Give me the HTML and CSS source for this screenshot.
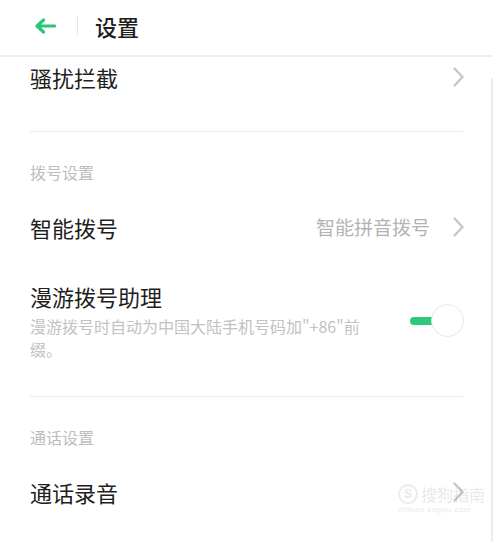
FILE: index.html
```html
<!DOCTYPE html>
<html lang="zh-CN">
<head>
<meta charset="utf-8">
<title>设置</title>
<link rel="stylesheet" href="styles.css">
</head>
<body>
<div class="screen">
  <header class="header">
    <svg class="back" width="22" height="16" viewBox="0 0 22 16"><path d="M20.5 8H3.5M9.5 2L3 8L9.5 14" fill="none" stroke="#2bc57a" stroke-width="3.2" stroke-linecap="round" stroke-linejoin="round"/></svg>
    <span class="vdiv"></span>
    <h1 class="title">设置</h1>
  </header>

  <div class="item item-first">
    <span class="item-title">骚扰拦截</span>
    <svg class="chev" width="11" height="20" viewBox="0 0 11 20"><path d="M1.5 1.5L9.5 10L1.5 18.5" fill="none" stroke="#c6c6c6" stroke-width="2.4" stroke-linecap="round" stroke-linejoin="round"/></svg>
  </div>
  <div class="divider divider-first"></div>

  <div class="section-label">拨号设置</div>
  <div class="item">
    <span class="item-title">智能拨号</span>
    <span class="item-value">智能拼音拨号</span>
    <svg class="chev" width="11" height="20" viewBox="0 0 11 20"><path d="M1.5 1.5L9.5 10L1.5 18.5" fill="none" stroke="#c6c6c6" stroke-width="2.4" stroke-linecap="round" stroke-linejoin="round"/></svg>
  </div>
  <div class="item item-multi">
    <div class="item-text">
      <div class="item-title">漫游拨号助理</div>
      <div class="item-desc">漫游拨号时自动为中国大陆手机号码加"+86"前缀。</div>
    </div>
    <div class="toggle">
      <span class="toggle-track"></span>
      <span class="toggle-knob"></span>
    </div>
  </div>
  <div class="divider divider-second"></div>

  <div class="section-label">通话设置</div>
  <div class="item">
    <span class="item-title">通话录音</span>
    <svg class="chev" width="11" height="20" viewBox="0 0 11 20"><path d="M1.5 1.5L9.5 10L1.5 18.5" fill="none" stroke="#c6c6c6" stroke-width="2.4" stroke-linecap="round" stroke-linejoin="round"/></svg>
  </div>

  <div class="scrollbar"></div>
  <div class="watermark">
    <div class="wm-row"><span class="wm-logo">S</span><span class="wm-name">搜狗指南</span></div>
    <div class="wm-url">zhinan.sogou.com</div>
  </div>
</div>
</body>
</html>
```

FILE: styles.css
```css
html, body {
  margin: 0;
  padding: 0;
  background: #ffffff;
}

body {
  font-family: "Noto Sans CJK SC", "Noto Sans", sans-serif;
  color: #1f1f1f;
}

.screen {
  position: relative;
  width: 500px;
  height: 542px;
  overflow: hidden;
}

.header {
  height: 57px;
  width: 492px;
  display: flex;
  align-items: center;
  padding-left: 34px;
  box-sizing: border-box;
  border-bottom: 2px solid #efefef;
}

.back {
  flex: none;
  margin-top: -4px;
}

.vdiv {
  width: 1px;
  height: 19px;
  background: #e6e6e6;
  margin-left: 21px;
  margin-top: -4px;
}

.title {
  margin: -4px 0 0 17px;
  font-size: 22px;
  font-weight: 500;
  line-height: 30px;
  color: #1e1e1e;
}

.item {
  height: 56px;
  display: flex;
  align-items: center;
  padding: 0 36px 0 30px;
}

.item-first {
  height: 40px;
}

.item-title {
  font-size: 22px;
  line-height: 30px;
  color: #1e1e1e;
}

span.item-title {
  flex: 1;
}

.item-value {
  font-size: 19px;
  line-height: 26px;
  color: #b3b3b3;
  margin-right: 23px;
}

.chev {
  flex: none;
}

.divider {
  margin: 0 37px 0 30px;
  border-top: 1px solid #e9e9e9;
}

.divider-first {
  margin-top: 34px;
}

.divider-second {
  margin-top: 35px;
}

.section-label {
  padding: 28px 30px 15px;
  font-size: 16px;
  line-height: 24px;
  color: #bdbdbd;
}

.item-multi {
  height: auto;
  padding-top: 26px;
  align-items: center;
}

.item-text {
  width: 352px;
  flex: none;
}

.item-desc {
  margin-top: 4px;
  font-size: 16px;
  line-height: 23px;
  color: #c2c2c2;
}

.toggle {
  position: relative;
  width: 54px;
  height: 34px;
  margin-left: auto;
}

.toggle-track {
  position: absolute;
  left: 0;
  top: 13px;
  width: 32px;
  height: 8px;
  border-radius: 4px;
  background: #2cc97a;
}

.toggle-knob {
  position: absolute;
  right: 0;
  top: 0;
  width: 31px;
  height: 31px;
  border-radius: 50%;
  background: #ffffff;
  border: 1.5px solid #e8e8e8;
}

.scrollbar {
  position: absolute;
  left: 491px;
  top: 78px;
  width: 2px;
  height: 464px;
  background: #ececec;
}

.watermark {
  position: absolute;
  left: 398px;
  top: 484px;
  opacity: 0.22;
  color: #9a9a9a;
}

.wm-row {
  display: flex;
  align-items: center;
  gap: 3px;
}

.wm-logo {
  width: 16px;
  height: 16px;
  border-radius: 50%;
  border: 2px solid #aaa;
  font-family: "Liberation Sans", sans-serif;
  font-weight: bold;
  font-size: 12px;
  line-height: 16px;
  text-align: center;
}

.wm-name {
  font-size: 16px;
  line-height: 20px;
}

.wm-url {
  font-family: "Liberation Sans", sans-serif;
  font-size: 8px;
  line-height: 12px;
  letter-spacing: 0.5px;
}
```
